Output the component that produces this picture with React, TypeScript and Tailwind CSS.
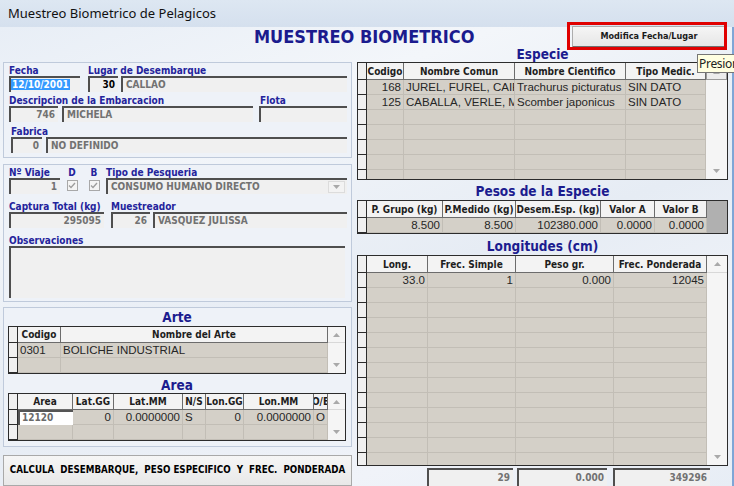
import React from 'react';

const tah = "font-['DejaVu_Sans_Condensed','DejaVu_Sans',sans-serif]";
const ari = "font-['Liberation_Sans',Arial,sans-serif]";

type Kids = { children?: React.ReactNode; className?: string };

const Label = ({ children, className = '' }: Kids) => (
  <div className={`h-[11px] whitespace-nowrap text-[10px] leading-[11px] font-bold text-[#24249c] ${className}`}>{children}</div>
);

const Box = ({ children, className = '', right = false, dark = false }: Kids & { right?: boolean; dark?: boolean }) => (
  <div
    className={`h-[16px] overflow-hidden whitespace-nowrap border-t-2 border-l-2 border-t-[#4f4f4f] border-l-[#4f4f4f] bg-[#f0f0f0] px-[3px] text-[10px] leading-[14px] font-bold ${right ? 'text-right' : ''} ${dark ? 'text-black' : 'text-[#727272]'} ${className}`}
  >
    {children}
  </div>
);

const Check = () => (
  <div className="flex h-[11px] w-[11px] items-center justify-center border border-[#a8a8a8] bg-[#f4f4f4]">
    <svg width="8" height="7" viewBox="0 0 8 7">
      <path d="M1 3.5L3 5.5L7 1" fill="none" stroke="#9c9c9c" strokeWidth="1.3" />
    </svg>
  </div>
);

const Arrow = ({ up = false }: { up?: boolean }) => (
  <svg width="7" height="4" viewBox="0 0 7 4">
    <path d={up ? 'M0 4L3.5 0L7 4Z' : 'M0 0L3.5 4L7 0Z'} fill="#a9a9a9" />
  </svg>
);

const Title = ({ children, className = '' }: Kids) => (
  <div className={`flex justify-center text-[13.5px] leading-[15px] font-bold text-[#1c1c8f] ${className}`}>{children}</div>
);

type Col = { label: string; w: string; right?: boolean };

type GridProps = {
  cols: Col[];
  rows: string[][];
  count: number;
  side: 'bar' | 'gray';
  sideW: string;
  headH: string;
  className?: string;
  edit?: boolean;
  boxed?: boolean;
};

const Grid = ({ cols, rows, count, side, sideW, headH, className = '', edit = false, boxed = false }: GridProps) => (
  <div className={`flex overflow-hidden border border-[#2c2c2c] bg-[#d4d0c8] ${className}`}>
    <div className="flex w-[9px] shrink-0 flex-col border-r border-[#2c2c2c]">
      <div className={`${headH} shrink-0 border-b border-[#2c2c2c] bg-[#f0f0f0]`} />
      {Array.from({ length: count }, (_, i) => (
        <div key={i} className="h-[15px] shrink-0 border-b border-[#2c2c2c] bg-[#f0f0f0]" />
      ))}
    </div>
    <div className="flex min-w-0 flex-1 flex-col">
      <div className={`flex ${headH} shrink-0`}>
        {cols.map((c) => (
          <div
            key={c.label}
            className={`${c.w} flex items-center justify-center overflow-hidden whitespace-nowrap border-r border-b border-[#6c6c6c] bg-[#f3f3f3] text-[10px] font-bold text-[#1e1e1e]`}
          >
            {c.label}
          </div>
        ))}
      </div>
      {Array.from({ length: count }, (_, r) => (
        <div key={r} className="flex h-[15px] shrink-0">
          {cols.map((c, k) =>
            edit && r === 0 && k === 0 ? (
              <div key={k} className={`${c.w} border-t-2 border-l-2 border-[#555] bg-white px-[2px] text-[10px] leading-[12px] font-bold text-[#6a6a6a]`}>
                {rows[r][k]}
              </div>
            ) : (
              <div
                key={k}
                className={`${c.w} overflow-hidden whitespace-nowrap border-r border-b border-[#c2beb6] px-[2px] text-[11.5px] leading-[14px] text-[#262626] ${ari} ${c.right ? 'text-right' : ''}`}
              >
                {rows[r] ? rows[r][k] : ''}
              </div>
            )
          )}
        </div>
      ))}
    </div>
    {side === 'gray' ? (
      <div className={`${sideW} shrink-0 bg-[#b0b0b0]`} />
    ) : (
      <div className={`${sideW} flex shrink-0 flex-col items-center justify-between bg-[#f5f5f5] pb-[6px]`}>
        <div className={`${headH} flex w-full items-center justify-center ${boxed ? 'border border-[#9a9a9a] bg-[#ececec]' : 'border-b border-[#d8d8d8]'}`}>
          <Arrow up />
        </div>
        <Arrow />
      </div>
    )}
  </div>
);

export default function App() {
  return (
    <div className={`relative h-[486px] w-[734px] overflow-hidden ${tah}`}>
      <div className="flex h-[27px] items-center bg-[linear-gradient(#dde7f2,#d5e0ee)] pl-[8px] font-['Noto_Sans',sans-serif] text-[13px] text-[#111]">
        Muestreo Biometrico de Pelagicos
      </div>

      <div className="h-[459px] border-r-2 border-r-[#7fa6d6] bg-[linear-gradient(160deg,#e8eef6_0%,#f3f6fa_25%,#e6ecf4_55%,#f0f3f9_80%,#e7edf5_100%)] pl-[3px]">
        <div className="flex h-[20px] items-start">
          <div className="ml-[251px] text-[18px] leading-[20px] font-bold text-[#1b1b8e]">MUESTREO BIOMETRICO</div>
          <div className="relative ml-auto mr-[6px] -mt-px">
            <button className="flex h-[22px] w-[154px] items-center justify-center border border-[#adadad] border-b-2 border-b-[#6f6f6f] bg-[linear-gradient(#f5f5f5,#e6e6e6)] text-[9px] font-bold text-[#1a1a1a]">
              Modifica Fecha/Lugar
            </button>
            <span className="pointer-events-none absolute -top-[4px] -right-px -bottom-[2px] -left-[5px] border-[3px] border-[#e00000]" />
            <span className="absolute top-[28px] left-[125px] z-10 h-[19px] w-[60px] whitespace-nowrap border border-[#767676] bg-[#ffffe1] pl-px font-['Noto_Sans',sans-serif] text-[12px] leading-[17px] tracking-[-0.3px] text-[#222]">
              Presion
            </span>
          </div>
        </div>

        <div className="flex gap-[5px]">
          {/* left side */}
          <div className="flex w-[349px] flex-col pt-[15px]">
            <div className="h-[96px] border border-[#bfcadb] bg-[#eef2f8] pt-[2px] pr-[4px] pl-[5px]">
              <div className="flex">
                <div className="w-[71px]">
                  <Label>Fecha</Label>
                  <Box className="w-[71px] pl-0">
                    <span className="bg-[#3399ff] px-[1px] text-white">12/10/2001</span>
                  </Box>
                </div>
                <div className="ml-[8px] flex-1">
                  <Label>Lugar de Desembarque</Label>
                  <div className="flex gap-[3px]">
                    <Box right dark className="w-[30px]">30</Box>
                    <Box className="flex-1">CALLAO</Box>
                  </div>
                </div>
              </div>
              <div className="mt-[3px] flex">
                <div className="w-[244px]">
                  <Label>Descripcion de la Embarcacion</Label>
                  <div className="flex gap-[4px]">
                    <Box right className="w-[49px]">746</Box>
                    <Box className="flex-1">MICHELA</Box>
                  </div>
                </div>
                <div className="ml-[6px] flex-1">
                  <Label className="pl-px">Flota</Label>
                  <Box />
                </div>
              </div>
              <div className="mt-[4px] ml-[2px]">
                <Label>Fabrica</Label>
                <div className="flex gap-[4px]">
                  <Box right className="w-[31px]">0</Box>
                  <Box className="flex-1">NO DEFINIDO</Box>
                </div>
              </div>
            </div>

            <div className="mt-[6px] h-[138px] border border-[#bfcadb] bg-[#eef2f8] pt-[2px] pr-[4px] pl-[5px]">
              <div className="flex">
                <div className="w-[51px]">
                  <Label>Nº Viaje</Label>
                  <Box right className="w-[51px]">1</Box>
                </div>
                <div className="ml-[6px] flex w-[12px] flex-col items-center">
                  <Label>D</Label>
                  <div className="mt-[2px]"><Check /></div>
                </div>
                <div className="ml-[10px] flex w-[12px] flex-col items-center">
                  <Label>B</Label>
                  <div className="mt-[2px]"><Check /></div>
                </div>
                <div className="ml-[6px] flex-1">
                  <Label>Tipo de Pesqueria</Label>
                  <Box className="flex items-center justify-between pr-[2px]">
                    <span>CONSUMO HUMANO DIRECTO</span>
                    <span className="flex h-[12px] w-[17px] items-center justify-center border border-[#dcdcdc] bg-[#f3f3f3]">
                      <Arrow />
                    </span>
                  </Box>
                </div>
              </div>
              <div className="mt-[7px] flex">
                <div className="w-[95px]">
                  <Label>Captura Total (kg)</Label>
                  <Box right>295095</Box>
                </div>
                <div className="ml-[7px] flex-1">
                  <Label>Muestreador</Label>
                  <div className="flex gap-[3px]">
                    <Box right className="w-[39px]">26</Box>
                    <Box className="flex-1">VASQUEZ JULISSA</Box>
                  </div>
                </div>
              </div>
              <div className="mt-[7px]">
                <Label>Observaciones</Label>
                <Box className="h-[52px] w-[336px]" />
              </div>
            </div>

            <div className="mt-[5px] h-[140px] border border-[#bfcadb] bg-[#eef2f8] pr-[5px] pl-[4px]">
              <Title className="h-[18px] pt-[2px]">Arte</Title>
              <Grid
                className="h-[48px]"
                headH="h-[16px]"
                count={2}
                side="bar"
                sideW="w-[17px]"
                cols={[
                  { label: 'Codigo', w: 'w-[43px] shrink-0' },
                  { label: 'Nombre del Arte', w: 'min-w-0 flex-1' },
                ]}
                rows={[['0301', 'BOLICHE INDUSTRIAL']]}
              />
              <Title className="h-[19px] pt-[4px]">Area</Title>
              <Grid
                className="h-[48px]"
                headH="h-[16px]"
                count={2}
                side="bar"
                sideW="w-[17px]"
                edit
                cols={[
                  { label: 'Area', w: 'w-[55px] shrink-0' },
                  { label: 'Lat.GG', w: 'w-[41px] shrink-0', right: true },
                  { label: 'Lat.MM', w: 'w-[69px] shrink-0', right: true },
                  { label: 'N/S', w: 'w-[23px] shrink-0' },
                  { label: 'Lon.GG', w: 'w-[38px] shrink-0', right: true },
                  { label: 'Lon.MM', w: 'w-[70px] shrink-0', right: true },
                  { label: 'O/E', w: 'min-w-0 flex-1' },
                ]}
                rows={[['12120', '0', '0.0000000', 'S', '0', '0.0000000', 'O']]}
              />
            </div>

            <div className="mt-[8px] flex h-[31px] items-center justify-center whitespace-pre border border-[#a9a9a9] bg-[linear-gradient(#f6f6f6,#e8e8e8)] text-[9.7px] font-bold text-black">
              {'CALCULA  DESEMBARQUE,  PESO ESPECIFICO  Y  FREC.  PONDERADA'}
            </div>
          </div>

          {/* right side */}
          <div className="flex w-[371px] flex-col">
            <Title className="h-[15px]">Especie</Title>
            <Grid
              className="h-[118px]"
              headH="h-[17px]"
              count={7}
              side="bar"
              sideW="w-[21px]"
              boxed
              cols={[
                { label: 'Codigo', w: 'w-[37px] shrink-0', right: true },
                { label: 'Nombre Comun', w: 'w-[111px] shrink-0' },
                { label: 'Nombre Cientifico', w: 'w-[111px] shrink-0' },
                { label: 'Tipo Medic.', w: 'min-w-0 flex-1' },
              ]}
              rows={[
                ['168', 'JUREL, FUREL, CAIR', 'Trachurus picturatus', 'SIN DATO'],
                ['125', 'CABALLA, VERLE, MA', 'Scomber japonicus', 'SIN DATO'],
              ]}
            />
            <Title className="h-[20px] pt-[4px]">Pesos de la Especie</Title>
            <Grid
              className="h-[34px]"
              headH="h-[17px]"
              count={1}
              side="gray"
              sideW="w-[20px]"
              cols={[
                { label: 'P. Grupo (kg)', w: 'w-[76px] shrink-0', right: true },
                { label: 'P.Medido (kg)', w: 'w-[73px] shrink-0', right: true },
                { label: 'Desem.Esp. (kg)', w: 'w-[85px] shrink-0', right: true },
                { label: 'Valor A', w: 'w-[54px] shrink-0', right: true },
                { label: 'Valor B', w: 'min-w-0 flex-1', right: true },
              ]}
              rows={[['8.500', '8.500', '102380.000', '0.0000', '0.0000']]}
            />
            <Title className="h-[21px] pt-[5px]">Longitudes (cm)</Title>
            <Grid
              className="h-[211px]"
              headH="h-[17px]"
              count={13}
              side="bar"
              sideW="w-[20px]"
              cols={[
                { label: 'Long.', w: 'w-[61px] shrink-0', right: true },
                { label: 'Frec. Simple', w: 'w-[88px] shrink-0', right: true },
                { label: 'Peso gr.', w: 'w-[98px] shrink-0', right: true },
                { label: 'Frec. Ponderada', w: 'min-w-0 flex-1', right: true },
              ]}
              rows={[['33.0', '1', '0.000', '12045']]}
            />
            <div className="mt-[2px] flex">
              <Box right className="ml-[70px] h-[18px] w-[86px] leading-[16px]">29</Box>
              <Box right className="ml-[4px] h-[18px] w-[90px] leading-[16px]">0.000</Box>
              <Box right className="ml-[6px] h-[18px] w-[97px] leading-[16px]">349296</Box>
            </div>
          </div>
        </div>
      </div>
    </div>
  );
}
